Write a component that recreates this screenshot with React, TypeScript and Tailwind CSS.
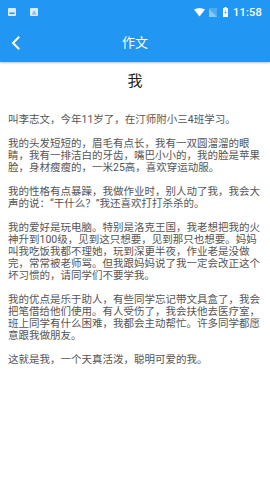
import React from "react";

const paras = [
  "叫李志文，今年11岁了，在汀师附小三4班学习。",
  "我的头发短短的，眉毛有点长，我有一双圆溜溜的眼睛，我有一排洁白的牙齿，嘴巴小小的，我的脸是苹果脸，身材瘦瘦的，一米25高，喜欢穿运动服。",
  "我的性格有点暴躁，我做作业时，别人动了我，我会大声的说：“干什么？”我还喜欢打打杀杀的。",
  "我的爱好是玩电脑。特别是洛克王国，我老想把我的火神升到100级，见到这只想要，见到那只也想要。妈妈叫我吃饭我都不理她，玩到深更半夜，作业老是没做完，常常被老师骂。但我跟妈妈说了我一定会改正这个坏习惯的，请同学们不要学我。",
  "我的优点是乐于助人，有些同学忘记带文具盒了，我会把笔借给他们使用。有人受伤了，我会扶他去医疗室，班上同学有什么困难，我都会主动帮忙。许多同学都愿意跟我做朋友。",
  "这就是我，一个天真活泼，聪明可爱的我。",
];

export default function App() {
  const font = { fontFamily: '"Roboto", "Noto Sans CJK SC", sans-serif' };
  return (
    <div className="w-[270px] h-[480px] bg-white overflow-hidden" style={font}>
      <div className="bg-[#2196f3] shadow-[0_1px_2px_rgba(0,0,0,0.25)] relative z-10">
        <div className="h-[24px] flex items-center px-[8px] text-white">
          <div className="flex items-center gap-[14px]">
            <svg width="8" height="8" viewBox="0 0 8 8">
              <rect x="0" y="0" width="8" height="8" rx="1" fill="#dbeafe" />
              <rect x="1.5" y="4.5" width="5" height="1.5" fill="#2196f3" />
            </svg>
            <svg width="8" height="8" viewBox="0 0 8 8">
              <rect x="0" y="0" width="8" height="8" rx="1" fill="#dbeafe" />
              <text x="4" y="6.5" fontSize="6" textAnchor="middle" fill="#2196f3" fontFamily="Roboto">A</text>
            </svg>
          </div>
          <div className="flex-1" />
          <div className="flex items-center">
            <svg width="11" height="9" viewBox="0 0 11 9" className="mr-[4px]">
              <path d="M0 1.5 Q5.5 -1.5 11 1.5 L5.5 8.5 Z" fill="white" />
            </svg>
            <svg width="8" height="9" viewBox="0 0 8 9" className="mr-[6px]">
              <path d="M0 1 L8 9 L0 9 Z" fill="rgba(255,255,255,0.35)" />
              <rect x="0" y="0" width="8" height="9" fill="rgba(255,255,255,0.2)" />
            </svg>
            <svg width="5" height="10" viewBox="0 0 5 10" className="mr-[5px]">
              <rect x="1.5" y="0" width="2" height="1" fill="white" />
              <rect x="0" y="1" width="5" height="9" rx="0.5" fill="white" />
              <path d="M3 2.5 L1.5 6 L2.6 6 L2 8.5 L3.6 5 L2.5 5 Z" fill="#2196f3" />
            </svg>
            <span className="text-[11px] font-medium leading-none tracking-[0.2px]">11:58</span>
          </div>
        </div>
        <div className="h-[38px] flex items-center relative">
          <svg width="12" height="14" viewBox="0 0 12 14" className="ml-[10px]">
            <path d="M8.5 1.5 L3 7 L8.5 12.5" stroke="white" strokeWidth="2" fill="none" strokeLinecap="square" />
          </svg>
          <span className="absolute left-0 right-0 text-center text-white text-[13px] pointer-events-none">作文</span>
        </div>
      </div>
      <div className="pt-[10px] px-[8px]">
        <div className="text-center text-[15px] leading-[18px] text-[#222] mb-[24px]">我</div>
        <div className="flex flex-col gap-[12px] text-[10.5px] leading-[12px] text-[#555]">
          {paras.map((p, i) => (
            <p key={i}>{p}</p>
          ))}
        </div>
      </div>
    </div>
  );
}
